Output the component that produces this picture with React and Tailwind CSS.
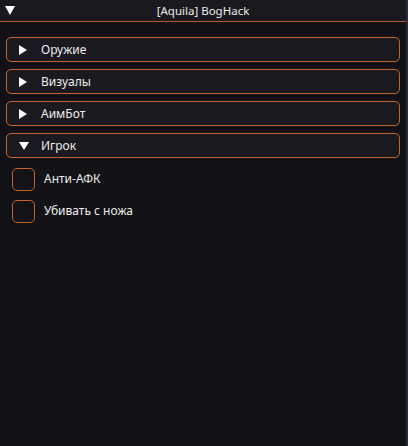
import React from "react";

const font = { fontFamily: '"Noto Sans", "DejaVu Sans", sans-serif' };

function Header({ label, open }) {
  return (
    <div className="flex items-center h-[25px] mx-[6px] rounded-[5px] border border-[#c8612c] bg-[#1b1a21] shrink-0">
      <div className="w-[34px] flex items-center pl-[12px]">
        {open ? (
          <svg width="10" height="8" viewBox="0 0 10 8"><polygon points="0,0 10,0 5,8" fill="#fff" /></svg>
        ) : (
          <svg width="8" height="10" viewBox="0 0 8 10"><polygon points="0,0 8,5 0,10" fill="#fff" /></svg>
        )}
      </div>
      <span className="text-[12px] text-[#ececec] leading-none">{label}</span>
    </div>
  );
}

function Check({ label }) {
  return (
    <div className="flex items-center gap-[9px] pl-[12px] h-[24px]">
      <div className="w-[23px] h-[23px] rounded-[5px] border border-[#c8612c] bg-[#141318]" />
      <span className="text-[12px] text-[#ececec] leading-none">{label}</span>
    </div>
  );
}

export default function App() {
  return (
    <div style={font} className="w-[408px] h-[446px] bg-[#131317] flex flex-col border-r-2 border-[#2a2d36] overflow-hidden">
      <div className="h-[22px] bg-[#1a1a1e] flex items-center relative border-b border-[#b8552a] shrink-0">
        <div className="absolute left-[5px] top-[6px]">
          <svg width="10" height="9" viewBox="0 0 10 9"><polygon points="0,0 10,0 5,9" fill="#fff" /></svg>
        </div>
        <span className="w-full text-center text-[11.5px] text-[#ececec] leading-none">[Aquila] BogHack</span>
      </div>
      <div className="flex flex-col gap-[7px] pt-[15px]">
        <Header label="Оружие" />
        <Header label="Визуалы" />
        <Header label="АимБот" />
        <Header label="Игрок" open />
      </div>
      <div className="flex flex-col gap-[8px] pt-[9px]">
        <Check label="Анти-АФК" />
        <Check label="Убивать с ножа" />
      </div>
    </div>
  );
}
